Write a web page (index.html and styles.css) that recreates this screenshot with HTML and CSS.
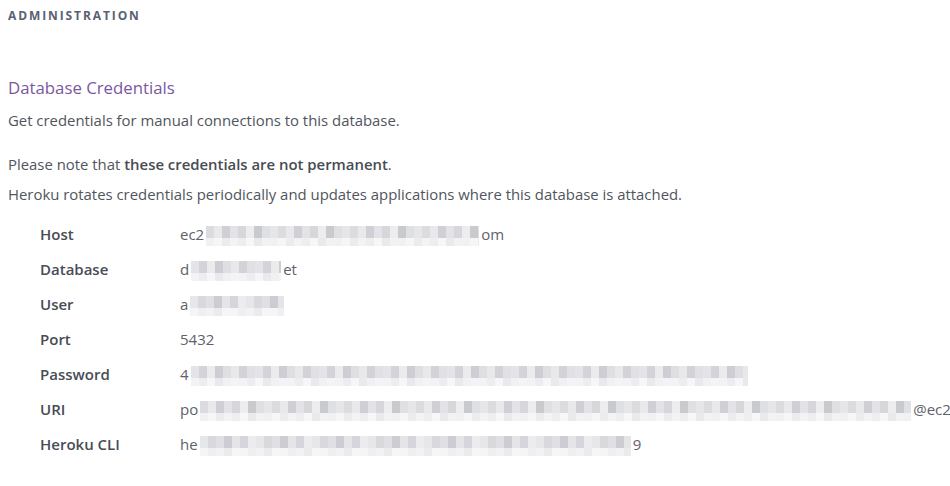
FILE: index.html
```html
<!DOCTYPE html>
<html lang="en">
<head>
<meta charset="utf-8">
<title>Database Credentials</title>
<link rel="stylesheet" href="styles.css">
</head>
<body>
<div class="page">
  <div class="section-header">Administration</div>
  <h2 class="title">Database Credentials</h2>
  <p class="intro">Get credentials for manual connections to this database.</p>
  <p class="note">Please note that <strong>these credentials are not permanent</strong>.</p>
  <p class="note2">Heroku rotates credentials periodically and updates applications where this database is attached.</p>
  <dl class="creds">
    <div class="row"><dt>Host</dt><dd>ec2<span class="mosaic" style="width:273px"></span>om</dd></div>
    <div class="row"><dt>Database</dt><dd>d<span class="mosaic m2" style="width:90px"></span>et</dd></div>
    <div class="row"><dt>User</dt><dd>a<span class="mosaic m3" style="width:94px"></span></dd></div>
    <div class="row"><dt>Port</dt><dd>5432</dd></div>
    <div class="row"><dt>Password</dt><dd>4<span class="mosaic m2" style="width:557px"></span></dd></div>
    <div class="row"><dt>URI</dt><dd>po<span class="mosaic" style="width:711px"></span>@ec2</dd></div>
    <div class="row"><dt>Heroku CLI</dt><dd>he<span class="mosaic m3" style="width:431px"></span>9</dd></div>
  </dl>
</div>
</body>
</html>
```

FILE: styles.css
```css
html, body {
  margin: 0;
  padding: 0;
  background: #ffffff;
  overflow: hidden;
}
body {
  font-family: "Open Sans", Lato, sans-serif;
  color: #51555d;
}
.page {
  padding: 9px 8px 0 8px;
}
.section-header {
  font-size: 12px;
  font-weight: 700;
  letter-spacing: 1.9px;
  text-transform: uppercase;
  line-height: 14px;
  color: #5a6172;
}
.title {
  margin: 55px 0 0 0;
  font-size: 16.8px;
  font-weight: 400;
  line-height: 20px;
  color: #79589f;
}
.intro {
  margin: 12px 0 0 0;
  font-size: 14.9px;
  line-height: 20px;
}
.note {
  margin: 24px 0 0 0;
  font-size: 14.9px;
  line-height: 20px;
}
.note strong {
  font-weight: 600;
  color: #474b53;
}
.note2 {
  margin: 10px 0 0 0;
  font-size: 14.9px;
  line-height: 20px;
}
.creds {
  margin: 12px 0 0 0;
  padding: 0 0 0 32px;
}
.row {
  display: flex;
  align-items: center;
  height: 35px;
  font-size: 15px;
  white-space: nowrap;
}
.row dt {
  width: 140px;
  flex: none;
  font-weight: 600;
  color: #474c55;
}
.row dd {
  margin: 0;
  display: flex;
  align-items: center;
  color: #5e626a;
}
.mosaic {
  display: inline-block;
  height: 20px;
  margin: 4px 2px 0 2px;
  background:
    repeating-linear-gradient(90deg,
      #dcdce0 0 8px, #e9e9ec 8px 16px, #cfd0d5 16px 24px, #e3e3e7 24px 32px,
      #d6d6db 32px 40px, #ededf0 40px 48px, #c9cace 48px 56px, #dfe0e4 56px 64px,
      #e6e6e9 64px 72px) 0 0 / 100% 12px no-repeat,
    repeating-linear-gradient(90deg,
      #f1f1f3 0 8px, #f6f6f7 8px 16px, #ececef 16px 24px, #f3f3f5 24px 32px,
      #eeeef1 32px 40px, #f7f7f8 40px 48px, #eaeaed 48px 56px, #f2f2f4 56px 64px) 0 12px / 100% 8px no-repeat;
}
.mosaic.m2 {
  background:
    repeating-linear-gradient(90deg,
      #e4e4e8 0 8px, #d3d4d9 8px 16px, #ebebee 16px 24px, #cdced3 24px 32px,
      #dedfe3 32px 40px, #e8e8eb 40px 48px, #d2d2d7 48px 56px, #e1e1e5 56px 64px) 0 0 / 100% 12px no-repeat,
    repeating-linear-gradient(90deg,
      #f3f3f5 0 8px, #ededf0 8px 16px, #f6f6f8 16px 24px, #eaeaed 24px 32px,
      #f1f1f3 32px 40px, #f4f4f6 40px 48px) 0 12px / 100% 8px no-repeat;
}
.mosaic.m3 {
  background:
    repeating-linear-gradient(90deg,
      #e7e7ea 0 8px, #d8d8dd 8px 16px, #e0e0e4 16px 24px, #cccdd2 24px 32px,
      #e5e5e8 32px 40px, #d5d6db 40px 48px, #ececef 48px 56px) 0 0 / 100% 12px no-repeat,
    repeating-linear-gradient(90deg,
      #f5f5f6 0 8px, #efeff1 8px 16px, #f2f2f4 16px 24px, #ebebee 24px 32px,
      #f6f6f7 32px 40px) 0 12px / 100% 8px no-repeat;
}
```
